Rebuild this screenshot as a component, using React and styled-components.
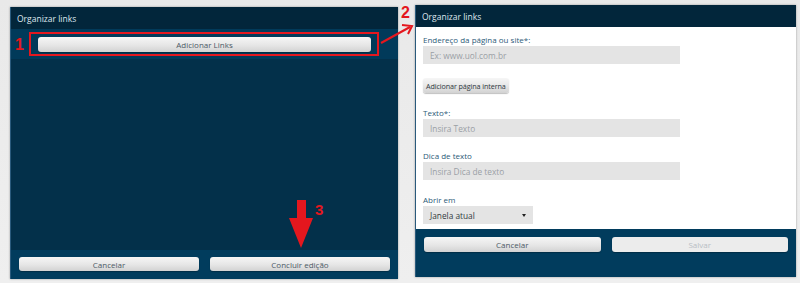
import React from "react";
import styled, { createGlobalStyle } from "styled-components";

const Global = createGlobalStyle`
  html, body {
    margin: 0;
    padding: 0;
    background: #ececec;
  }
  body {
    font-family: "Open Sans", "Noto Sans", sans-serif;
  }
`;

const Page = styled.div`
  position: relative;
  width: 800px;
  height: 283px;
  overflow: hidden;
  display: flex;
  align-items: flex-start;
  padding-left: 10px;
  box-sizing: border-box;
  background: linear-gradient(180deg, #e9e9e9 0%, #efefef 100%);
`;

const Panel = styled.div`
  width: ${(p) => p.width}px;
  height: 272px;
  margin-top: ${(p) => p.top}px;
  margin-left: ${(p) => p.gap || 0}px;
  display: flex;
  flex-direction: column;
  box-shadow: 0 0 2px rgba(0, 0, 0, 0.35);
  border-left: 1px solid #2a5a7c;
  box-sizing: border-box;
  overflow: hidden;
`;

const Header = styled.div`
  height: 22px;
  flex: none;
  background: #02263b;
  color: #dfe7ee;
  font-size: 8.5px;
  display: flex;
  align-items: center;
  padding-left: 6px;
`;

const Band = styled.div`
  height: 30px;
  flex: none;
  background: #013a5a;
  display: flex;
  align-items: center;
  padding: 0 27px;
`;

const DarkBody = styled.div`
  flex: 1;
  background: #03304a;
`;

const Footer = styled.div`
  height: ${(p) => p.h}px;
  flex: none;
  background: #013c5d;
  display: flex;
  align-items: flex-start;
  gap: 11px;
  padding: ${(p) => p.pt}px 8px 0 8px;
  box-sizing: border-box;
`;

const Button = styled.div`
  flex: ${(p) => (p.grow ? 1 : "none")};
  height: ${(p) => p.h || 15}px;
  margin-top: ${(p) => p.mt || 0}px;
  padding: 0 ${(p) => (p.compact ? 3 : 5)}px;
  border-radius: 3px;
  background: ${(p) =>
    p.disabled
      ? "#ececec"
      : "linear-gradient(180deg, #f6f6f6 0%, #e6e6e6 55%, #d2d2d2 100%)"};
  color: ${(p) => (p.disabled ? "#b8bec4" : p.compact ? "#2f3840" : "#4d5a66")};
  font-size: ${(p) => (p.compact ? 7.2 : 8)}px;
  letter-spacing: ${(p) => (p.compact ? "-0.1px" : "0")};
  display: flex;
  align-items: center;
  justify-content: center;
  box-shadow: 0 1px 1px rgba(0, 0, 0, 0.25);
  white-space: nowrap;
`;

const WhiteBody = styled.div`
  flex: 1;
  background: #ffffff;
  padding: 8px 7px 0 7px;
  display: flex;
  flex-direction: column;
  align-items: flex-start;
`;

const Label = styled.div`
  font-size: 8px;
  color: #2d5a78;
  line-height: 10px;
  margin-bottom: 1px;
  margin-top: ${(p) => p.mt || 0}px;
`;

const Input = styled.div`
  width: ${(p) => p.w}px;
  height: 18px;
  flex: none;
  background: #e4e4e4;
  color: ${(p) => (p.dark ? "#333b42" : "#9a9fa4")};
  font-size: 8.3px;
  display: flex;
  align-items: center;
  justify-content: space-between;
  padding: 0 7px;
  box-sizing: border-box;
`;

const Caret = styled.span`
  width: 0;
  height: 0;
  border-left: 2px solid transparent;
  border-right: 2px solid transparent;
  border-top: 3px solid #222;
`;

const RedBox = styled.div`
  position: absolute;
  left: 29px;
  top: 32px;
  width: 350px;
  height: 24px;
  border: 2px solid #e4171e;
  box-sizing: border-box;
`;

const Num = styled.div`
  position: absolute;
  left: ${(p) => p.x}px;
  top: ${(p) => p.y}px;
  color: #e4171e;
  font-family: "Liberation Sans", Arial, sans-serif;
  font-weight: 700;
  font-size: ${(p) => p.size || 16}px;
  line-height: 1;
`;

const Overlay = styled.svg`
  position: absolute;
  left: 0;
  top: 0;
  pointer-events: none;
`;

export default function App() {
  return (
    <Page>
      <Global />
      <Panel width={388} top={7}>
        <Header>Organizar links</Header>
        <Band>
          <Button grow>Adicionar Links</Button>
        </Band>
        <DarkBody />
        <Footer h={29} pt={7}>
          <Button grow h={14}>Cancelar</Button>
          <Button grow h={14}>Concluir edição</Button>
        </Footer>
      </Panel>

      <Panel width={381} top={5} gap={17}>
        <Header>Organizar links</Header>
        <WhiteBody>
          <Label>Endereço da página ou site*:</Label>
          <Input w={257}>Ex: www.uol.com.br</Input>
          <Button h={15} mt={14} compact>Adicionar página interna</Button>
          <Label mt={15}>Texto*:</Label>
          <Input w={257}>Insira Texto</Input>
          <Label mt={14}>Dica de texto</Label>
          <Input w={257}>Insira Dica de texto</Input>
          <Label mt={15}>Abrir em</Label>
          <Input w={110} dark>
            Janela atual
            <Caret />
          </Input>
        </WhiteBody>
        <Footer h={48} pt={8}>
          <Button grow>Cancelar</Button>
          <Button grow disabled>Salvar</Button>
        </Footer>
      </Panel>

      <RedBox />
      <Num x={15} y={37}>1</Num>
      <Num x={401} y={5}>2</Num>
      <Num x={315} y={202} size={15}>3</Num>
      <Overlay width="800" height="283" viewBox="0 0 800 283">
        <line x1="381" y1="43" x2="410" y2="27" stroke="#e4171e" strokeWidth="2" />
        <polyline points="402,25 412,26 408,34" fill="none" stroke="#e4171e" strokeWidth="2" />
        <rect x="297" y="200" width="9" height="19" fill="#e4171e" />
        <polygon points="289,218 313,218 301,248" fill="#e4171e" />
      </Overlay>
    </Page>
  );
}
